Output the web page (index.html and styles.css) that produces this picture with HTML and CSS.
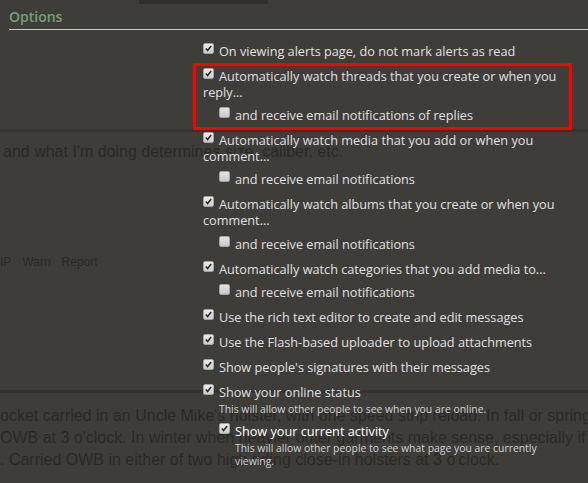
FILE: index.html
```
<!DOCTYPE html>
<html>
<head>
<meta charset="utf-8">
<link rel="stylesheet" href="styles.css">
</head>
<body>
<div class="screen">
  <div class="bg">
    <div class="tab"></div>
    <div class="rule"></div>
    <p class="para first">and what I'm doing determines size, caliber, etc.</p>
    <div class="actions"><span>IP</span><span>Warn</span><span>Report</span></div>
    <div class="rule rule2"></div>
    <div class="para lines">
      <div>ocket carried in an Uncle Mike's holster, with one speed strip reload. In fall or spring</div>
      <div>OWB at 3 o'clock. In winter when heavier outer garments make sense, especially if I'm</div>
      <div>. Carried OWB in either of two high riding close-in holsters at 3 o'clock.</div>
    </div>
  </div>

  <div class="overlay">
    <h3 class="head">Options</h3>
    <ul class="opts">
      <li><label><span class="cb"><svg viewBox="0 0 11 11"><path d="M2.2 5.6 L4.4 8 L8.8 2.4" /></svg></span>On viewing alerts page, do not mark alerts as read</label></li>
      <li><label><span class="cb"><svg viewBox="0 0 11 11"><path d="M2.2 5.6 L4.4 8 L8.8 2.4" /></svg></span>Automatically watch threads that you create or when you reply...</label>
        <ul class="sub"><li><label><span class="cb off"></span>and receive email notifications of replies</label></li></ul>
      </li>
      <li><label><span class="cb"><svg viewBox="0 0 11 11"><path d="M2.2 5.6 L4.4 8 L8.8 2.4" /></svg></span>Automatically watch media that you add or when you comment...</label>
        <ul class="sub"><li><label><span class="cb off"></span>and receive email notifications</label></li></ul>
      </li>
      <li><label><span class="cb"><svg viewBox="0 0 11 11"><path d="M2.2 5.6 L4.4 8 L8.8 2.4" /></svg></span>Automatically watch albums that you create or when you comment...</label>
        <ul class="sub"><li><label><span class="cb off"></span>and receive email notifications</label></li></ul>
      </li>
      <li><label><span class="cb"><svg viewBox="0 0 11 11"><path d="M2.2 5.6 L4.4 8 L8.8 2.4" /></svg></span>Automatically watch categories that you add media to...</label>
        <ul class="sub"><li><label><span class="cb off"></span>and receive email notifications</label></li></ul>
      </li>
      <li><label><span class="cb"><svg viewBox="0 0 11 11"><path d="M2.2 5.6 L4.4 8 L8.8 2.4" /></svg></span>Use the rich text editor to create and edit messages</label></li>
      <li><label><span class="cb"><svg viewBox="0 0 11 11"><path d="M2.2 5.6 L4.4 8 L8.8 2.4" /></svg></span>Use the Flash-based uploader to upload attachments</label></li>
      <li><label><span class="cb"><svg viewBox="0 0 11 11"><path d="M2.2 5.6 L4.4 8 L8.8 2.4" /></svg></span>Show people's signatures with their messages</label></li>
      <li><label><span class="cb"><svg viewBox="0 0 11 11"><path d="M2.2 5.6 L4.4 8 L8.8 2.4" /></svg></span>Show your online status</label>
        <p class="hint">This will allow other people to see when you are online.</p>
        <ul class="sub"><li><label class="bright"><span class="cb"><svg viewBox="0 0 11 11"><path d="M2.2 5.6 L4.4 8 L8.8 2.4" /></svg></span>Show your current activity</label>
          <p class="hint">This will allow other people to see what page you are currently viewing.</p>
        </li></ul>
      </li>
    </ul>
    <div class="mark"></div>
  </div>
</div>
</body>
</html>
```
FILE: styles.css
```
html, body {
  margin: 0;
  padding: 0;
  background: #3f3d3a;
}
.screen {
  position: relative;
  width: 588px;
  height: 483px;
  overflow: hidden;
}
.bg {
  color: #2a2927;
  font-family: "Liberation Sans", Arial, sans-serif;
}
.tab {
  margin-left: 139px;
  width: 129px;
  height: 4px;
  background: #2f2e2b;
}
.rule {
  height: 3px;
  background: #333230;
  margin-top: 125px;
}
.para {
  margin: 0;
  font-size: 16px;
  line-height: 22px;
  white-space: nowrap;
}
.first {
  margin-top: 9px;
  padding-left: 3px;
}
.actions {
  margin-top: 91px;
  font-size: 12px;
  line-height: 16px;
}
.actions span {
  margin-right: 11px;
}
.rule2 {
  margin-top: 120px;
}
.lines {
  margin-top: 12px;
}
.overlay {
  position: absolute;
  top: 0;
  left: 0;
  right: 0;
  font-family: "Open Sans", "DejaVu Sans", sans-serif;
}
.head {
  margin: 0 0 0 9px;
  padding: 8px 0 3px;
  border-bottom: 1px solid #c4cfbc;
  font-size: 14px;
  line-height: 18px;
  font-weight: 600;
  color: #7c9e76;
}
.opts {
  list-style: none;
  margin: 0 0 0 203px;
  padding: 4px 0 0;
  width: 366px;
}
.opts li {
  margin-top: 9px;
  font-size: 12.7px;
  line-height: 16px;
  color: #e0e0e0;
}
.opts .sub {
  list-style: none;
  margin: 7.2px 0 0 16px;
  padding: 0;
}
.opts .sub li {
  margin-top: 0;
}
.cb {
  display: inline-block;
  width: 11px;
  height: 11px;
  box-sizing: border-box;
  border: 1px solid #a4a4a4;
  border-radius: 2px;
  background: linear-gradient(#ececec, #cdcdcd);
  vertical-align: 2px;
  margin-right: 5px;
}
.cb svg {
  display: block;
  width: 9px;
  height: 9px;
  margin: 0;
}
.cb path {
  fill: none;
  stroke: #2b2b2b;
  stroke-width: 1.9;
}
.cb.off {
  background: linear-gradient(#e4e4e4, #c8c8c8);
}
.bright {
  color: #ffffff;
}
.hint {
  margin: 2.8px 0 0 16px;
  font-size: 10.4px;
  line-height: 13.3px;
  color: #d2d2d2;
}
.mark {
  position: absolute;
  left: 193px;
  top: 63px;
  width: 379px;
  height: 67px;
  box-sizing: border-box;
  border: 3px solid #ff0000;
}
```
